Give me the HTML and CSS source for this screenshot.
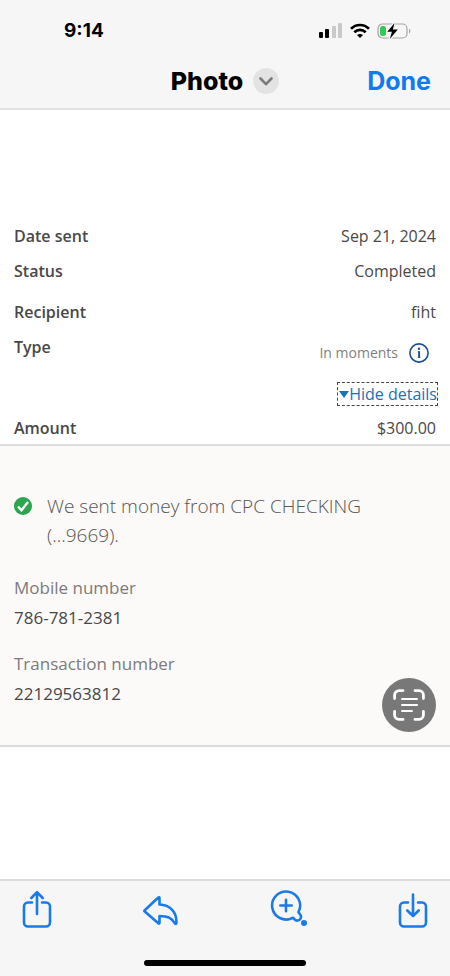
FILE: index.html
```html
<!DOCTYPE html>
<html lang="en">
<head>
<meta charset="utf-8">
<meta name="viewport" content="width=device-width, initial-scale=1">
<title>Photo</title>
<link rel="stylesheet" href="styles.css">
</head>
<body>
<header class="top">
  <div class="status">
    <time class="clock">9:14</time>
    <div class="signals">
      <svg width="24" height="16" viewBox="0 0 24 16" aria-hidden="true">
        <rect x="0" y="9" width="4" height="6" rx="1"/>
        <rect x="6" y="6" width="4" height="9" rx="1"/>
        <g fill="#c9c9c9"><rect x="13" y="3" width="4" height="12" rx="1"/><rect x="19" y="0" width="4" height="15" rx="1"/></g>
      </svg>
      <svg width="20" height="16" viewBox="0 0 20 16" fill="none" stroke="#000" stroke-width="2.7" aria-hidden="true">
        <path d="M1 5.8C6 .7 14 .7 19 5.8M4.3 9.3c3.2-3.2 8.2-3.2 11.4 0"/>
        <path d="M10 15l-3-3c1.800-1.400 4.200-1.400 6 0z" fill="#000" stroke="none"/>
      </svg>
      <svg width="34" height="16" viewBox="0 0 34 16" aria-hidden="true">
        <rect x="1" y="1" width="29" height="14" rx="4.500" fill="none" stroke="#a5a5a5" stroke-width="1.200"/>
        <path d="M32 5.500c1.800.8 1.800 4.200 0 5z" fill="#a5a5a5"/>
        <path d="M17.500 0L10.300 8.800h4.600L12.800 16l8-9.400h-4.900z" stroke="#f6f6f6" stroke-width="2.500" paint-order="stroke"/>
        <rect x="3" y="3" width="6" height="10" rx="2.500" fill="#35c759"/>
      </svg>
    </div>
  </div>
  <nav class="nav">
    <h1 class="title">Photo</h1>
    <button class="chevron" aria-label="More options">
      <svg width="14" height="9" viewBox="0 0 14 9" fill="none" stroke="#7b7b7d" stroke-width="2.600" stroke-linecap="round" stroke-linejoin="round"><path d="M1.500 1.500L7 7.200l5.500-5.700"/></svg>
    </button>
    <button class="done">Done</button>
  </nav>
</header>

<main class="photo">
  <dl class="summary">
    <div class="row"><dt>Date sent</dt><dd>Sep 21, 2024</dd></div>
    <div class="row"><dt>Status</dt><dd>Completed</dd></div>
    <div class="row spaced"><dt>Recipient</dt><dd>fiht</dd></div>
    <div class="row"><dt>Type</dt>
      <dd class="type">
        <span class="speed">In moments
          <button class="info" aria-label="About delivery time">
            <svg width="20" height="20" viewBox="0 0 20 20"><circle cx="10" cy="10" r="9.100" fill="none" stroke="#1f4f8f" stroke-width="1.600"/><circle cx="10" cy="5.700" r="1.200" fill="#1f4f8f"/><path d="M10.100 8.300v6.400" fill="none" stroke="#1f4f8f" stroke-width="1.900"/><path d="M8.800 8.800h1.500M8.800 14.300h2.600" fill="none" stroke="#1f4f8f"/></svg>
          </button>
        </span>
        <a class="toggle" href="#details"><svg width="10" height="7" viewBox="0 0 10 7" aria-hidden="true"><path d="M0 0h10L5 7z" fill="#1a70b8"/></svg>Hide details</a>
      </dd>
    </div>
    <div class="row"><dt>Amount</dt><dd>$300.00</dd></div>
  </dl>

  <section class="details" id="details">
    <div class="notice">
      <svg width="18" height="18" viewBox="0 0 18 18" aria-hidden="true"><circle cx="9" cy="9" r="9" fill="#2da44e"/><path d="M4 9.500l3.500 3.700L14 5" fill="none" stroke="#fff" stroke-width="2.400"/></svg>
      <p>We sent money from CPC CHECKING (...9669).</p>
    </div>
    <dl class="facts">
      <div><dt>Mobile number</dt><dd>786-781-2381</dd></div>
      <div><dt>Transaction number</dt><dd>22129563812</dd></div>
    </dl>
    <button class="scan" aria-label="Scan text">
      <svg width="32" height="32" viewBox="0 0 32 32" fill="none" stroke="#fff" stroke-linecap="round">
        <path stroke-width="2.800" d="M1.600 9.500V6a4.400 4.400 0 0 1 4.400-4.400h4M22 1.600h4A4.400 4.400 0 0 1 30.400 6v3.500M30.400 22.500V26a4.400 4.400 0 0 1-4.400 4.400h-4M10 30.400H6A4.400 4.400 0 0 1 1.600 26v-3.500"/>
        <path stroke-width="2" d="M9 10h15M9 16h15M9 22h10"/>
      </svg>
    </button>
  </section>
</main>

<footer class="bottom">
  <div class="tools">
    <button aria-label="Share">
      <svg width="30" height="40" viewBox="0 0 30 40"><path d="M10 12.500H6A4 4 0 0 0 2 16.500v16A4 4 0 0 0 6 36.500h18a4 4 0 0 0 4-4v-16a4 4 0 0 0-4-4h-4M15 24V2.500M9.300 8L15 2.200 20.700 8"/></svg>
    </button>
    <button aria-label="Reply">
      <svg width="36" height="40" viewBox="0 0 36 40"><path d="M2.500 20.500L16 7.700q1.500-1.200 1.500.6v6.200C28 15 34.500 21.500 34.500 32.500q-.2 2.500-1.800.6C29.500 28 26 26 17.500 26v6.500q0 2-1.500.6L2.500 21.300q-.5-.4 0-.8z"/></svg>
    </button>
    <button aria-label="Zoom and mark up">
      <svg width="40" height="40" viewBox="0 0 40 40"><path d="M24.600 27.900A14 14 0 1 1 30.500 22C31 23.600 33.300 24.200 33 27A3.800 3.800 0 0 1 26.300 29.200Q25.800 28 24.600 27.900zM18 9.800v11.400M12.300 15.500h11.400"/><circle class="dot" cx="36" cy="33" r="3"/></svg>
    </button>
    <button aria-label="Save">
      <svg width="30" height="40" viewBox="0 0 30 40"><path d="M10 12.500H6A4 4 0 0 0 2 16.500v16A4 4 0 0 0 6 36.500h18a4 4 0 0 0 4-4v-16a4 4 0 0 0-4-4h-4M15 4.500V25M9.300 20.500L15 26l5.700-5.500"/></svg>
    </button>
  </div>
  <div class="home"></div>
</footer>
</body>
</html>
```
FILE: styles.css
```css
* { box-sizing: border-box; }

body {
  margin: 0;
  min-height: 100vh;
  display: flex;
  flex-direction: column;
  background: #fff;
  color: #484848;
  font-family: "Open Sans", sans-serif;
  font-size: 16px;
  line-height: 24px;
}

button {
  padding: 0;
  border: 0;
  background: none;
  font: inherit;
  color: inherit;
}

svg { display: block; flex: none; }
dl, dd, p, h1 { margin: 0; }

.top {
  padding: 18px 19px 11px;
  background: #f6f6f6;
  border-bottom: 2px solid #e2e2e2;
  color: #000;
  font-family: Inter, sans-serif;
}

.status {
  display: flex;
  align-items: center;
  justify-content: space-between;
  padding: 0 20px 0 45px;
}

.clock { font-size: 19px; font-weight: 700; line-height: 26px; }
.signals { display: flex; align-items: center; gap: 7px; }

.nav {
  display: grid;
  grid-template-columns: 1fr auto auto 1fr;
  align-items: center;
  column-gap: 10px;
  padding-top: 21px;
}

.title {
  grid-column: 2;
  font-size: 25px;
  line-height: 32px;
  font-weight: 800;
}

.chevron {
  display: grid;
  place-items: center;
  width: 26px;
  height: 26px;
  border-radius: 50%;
  background: #e3e3e4;
}

.done {
  justify-self: end;
  color: #117af0;
  font-size: 25px;
  font-weight: 700;
}

.summary {
  display: grid;
  row-gap: 11px;
  padding: 114px 14px 4px;
}

.row { display: flex; justify-content: space-between; }
.row dt { font-weight: 600; }
.spaced { padding-top: 6px; }

.type {
  display: flex;
  flex-direction: column;
  align-items: flex-end;
  gap: 18px;
  padding-top: 6px;
}

.speed {
  display: flex;
  align-items: center;
  gap: 11px;
  padding-right: 7px;
  color: #808080;
  font-size: 14px;
}

.toggle {
  display: flex;
  align-items: center;
  line-height: 22px;
  margin-right: -1px;
  padding-left: 1px;
  color: #1a70b8;
  text-decoration: none;
  outline: 1px dashed #444;
}

.details {
  position: relative;
  padding: 46px 14px 36px;
  background: #fbfaf8;
  border-top: 2px solid #dcdcdc;
  border-bottom: 2px solid #dcdcdc;
}

.notice {
  display: flex;
  gap: 15px;
  padding-right: 40px;
  color: #555;
  font-size: 19px;
  font-weight: 300;
  line-height: 29px;
}

.notice svg { margin-top: 5px; }

.facts {
  display: grid;
  gap: 16px;
  margin-top: 23px;
  font-size: 17px;
  line-height: 30px;
}

.facts dt { color: #7b7b7b; }

.scan {
  position: absolute;
  right: 14px;
  bottom: 13px;
  display: grid;
  place-items: center;
  width: 54px;
  height: 54px;
  border-radius: 50%;
  background: #797878;
}

.bottom {
  margin-top: auto;
  padding-bottom: 10px;
  background: #f6f6f6;
  border-top: 2px solid #dcdcdc;
}

.tools {
  display: flex;
  justify-content: space-between;
  padding: 9px 22px 0;
}

.tools svg {
  fill: none;
  stroke: #1a7be6;
  stroke-width: 2.600;
  stroke-linecap: round;
  stroke-linejoin: round;
}

.tools .dot { fill: #1a7be6; stroke: none; }

.home {
  width: 36%;
  height: 6px;
  margin: 30px auto 0;
  border-radius: 3px;
  background: #000;
}
```
